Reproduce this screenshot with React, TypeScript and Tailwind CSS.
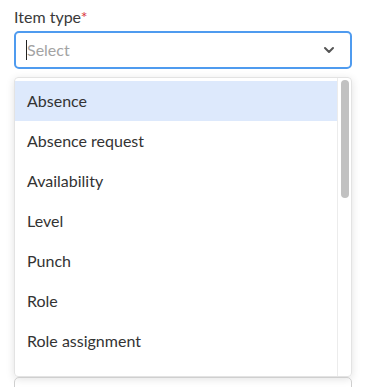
import React from 'react';
import { ChevronDown } from 'lucide-react';

const options = [
  'Absence',
  'Absence request',
  'Availability',
  'Level',
  'Punch',
  'Role',
  'Role assignment',
  'Rules',
];

const App: React.FC = () => {
  return (
    <div className="w-[365px] h-[387px] overflow-hidden bg-white font-['Lato',sans-serif] text-[#333]">
      <div className="pl-[14px] pr-[13px] pt-[7px]">
        <label className="block text-[16px] leading-[20px] text-[#3a3a3a]">
          Item type<span className="text-[#d9363e]">*</span>
        </label>
        <div className="mt-[4px] h-[38px] rounded-[5px] border-2 border-[#4f9bef] flex items-center pl-[10px] pr-[13px]">
          <span className="w-px h-[20px] bg-[#222]" />
          <span className="flex-1 text-[16px] text-[#a3a3a3]">Select</span>
          <ChevronDown className="w-[16px] h-[16px] text-[#555]" strokeWidth={3} />
        </div>

        <div className="mt-[8px] h-[300px] rounded-[4px] border border-[#e3e3e3] shadow-[0_2px_8px_rgba(0,0,0,0.12)] flex overflow-hidden">
          <ul className="flex-1 pt-[3px]">
            {options.map((opt, i) => (
              <li
                key={opt}
                className={`h-[40px] flex items-center pl-[12px] text-[16px] ${i === 0 ? 'bg-[#dde9fc]' : ''}`}
              >
                {opt}
              </li>
            ))}
          </ul>
          <div className="w-[14px] border-l border-[#ececec] pt-[2px] flex justify-center">
            <div className="w-[8px] h-[118px] rounded-full bg-[#c1c1c1]" />
          </div>
        </div>

        <div className="h-[20px] rounded-t-[5px] border border-[#cfcfcf]" />
      </div>
    </div>
  );
};

export default App;
